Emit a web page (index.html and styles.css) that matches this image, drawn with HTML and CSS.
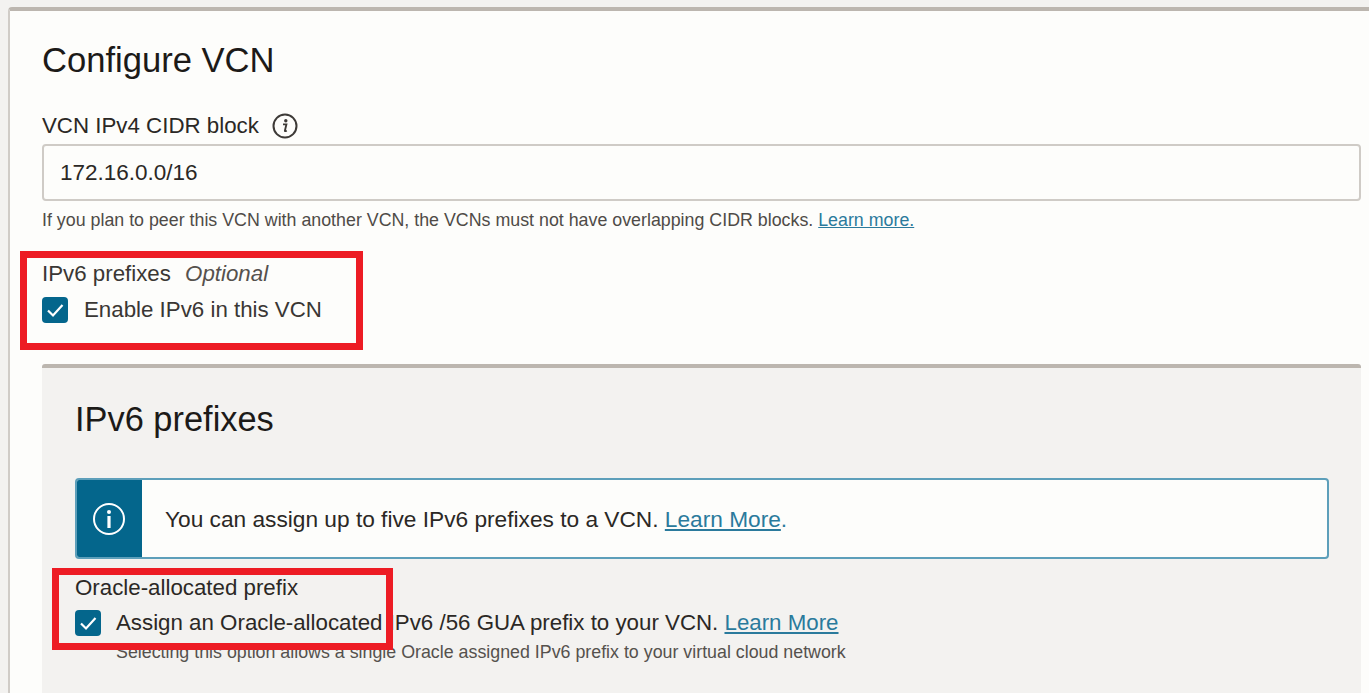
FILE: index.html
```html
<!DOCTYPE html>
<html lang="en">
<head>
    <meta charset="UTF-8">
    <title>Configure VCN</title>
    <link rel="stylesheet" href="styles.css">
</head>
<body>
    <div class="card">
        <h2>Configure VCN</h2>
        <div class="label-row">
            <label for="cidr">VCN IPv4 CIDR block</label>
            <svg class="hint-icon" width="28" height="28" viewBox="0 0 28 28">
                <circle cx="14" cy="14" r="11.5" fill="none" stroke="#3d3a37" stroke-width="2"/>
                <circle cx="14.8" cy="8.8" r="1.7" fill="#3d3a37"/>
                <path d="M12 12.4h3.4l-1.5 6.2c-.1.6.4.8 1.8-.2" fill="none" stroke="#3d3a37" stroke-width="1.9"/>
            </svg>
        </div>
        <input id="cidr" class="text-input" type="text" value="172.16.0.0/16">
        <p class="help">If you plan to peer this VCN with another VCN, the VCNs must not have overlapping CIDR blocks. <a href="#">Learn more.</a></p>

        <div class="field-title">IPv6 prefixes <em>Optional</em></div>
        <div class="check-row">
            <span class="checkbox">
                <svg width="26" height="26" viewBox="0 0 26 26"><path d="M6 13.5l5 5 9.5-10.5" fill="none" stroke="#fff" stroke-width="2.2"/></svg>
            </span>
            <span>Enable IPv6 in this VCN</span>
        </div>

        <div class="sub-panel">
            <h3>IPv6 prefixes</h3>
            <div class="alert">
                <div class="alert-icon">
                    <svg width="34" height="34" viewBox="0 0 34 34">
                        <circle cx="17" cy="17" r="15" fill="none" stroke="#fff" stroke-width="2"/>
                        <circle cx="17" cy="10" r="2" fill="#fff"/>
                        <rect x="15.4" y="14" width="3.2" height="12" fill="#fff"/>
                    </svg>
                </div>
                <div class="alert-text">You can assign up to five IPv6 prefixes to a VCN. <a href="#">Learn More</a><span class="dot">.</span></div>
            </div>
            <div class="field-title small-gap">Oracle-allocated prefix</div>
            <div class="check-row tight">
                <span class="checkbox">
                    <svg width="26" height="26" viewBox="0 0 26 26"><path d="M6 13.5l5 5 9.5-10.5" fill="none" stroke="#fff" stroke-width="2.2"/></svg>
                </span>
                <span>Assign an Oracle-allocated IPv6 /56 GUA prefix to your VCN. <a href="#">Learn More</a></span>
            </div>
            <p class="help indented">Selecting this option allows a single Oracle assigned IPv6 prefix to your virtual cloud network</p>
        </div>
    </div>

    <div class="callout callout-one"></div>
    <div class="callout callout-two"></div>
</body>
</html>
```

FILE: styles.css
```css
* {
    margin: 0;
    padding: 0;
    box-sizing: border-box;
    font-family: 'Liberation Sans', Arial, sans-serif;
}
html, body {
    height: 693px;
    overflow: hidden;
}
body {
    background: #f3f2f0;
    padding: 7px 0 0 8px;
    color: #2b2825;
}
a {
    color: #2a7a9c;
    text-decoration: underline;
}
.card {
    background: #fdfdfb;
    border-top: 4px solid #bcb6af;
    border-left: 2px solid #d0ccc7;
    border-top-left-radius: 4px;
    height: 686px;
    padding: 29px 8px 0 32px;
    overflow: hidden;
}
h2 {
    font-size: 34.6px;
    font-weight: 400;
    line-height: 40px;
    color: #1c1a18;
    margin-bottom: 32px;
}
.label-row {
    display: flex;
    align-items: center;
    gap: 12px;
    height: 28px;
    font-size: 22.3px;
    margin-bottom: 4px;
}
.hint-icon {
    flex: none;
}
.text-input {
    display: block;
    width: 100%;
    height: 57px;
    padding: 0 16px;
    border: 2px solid #cfcbc6;
    border-radius: 4px;
    background: #fdfdfb;
    font-size: 22.5px;
    color: #2b2825;
}
.help {
    font-size: 17.82px;
    line-height: 22px;
    margin-top: 8px;
    color: #4f4b47;
}
.field-title {
    font-size: 22.3px;
    line-height: 26px;
    margin-top: 30px;
    color: #3a3734;
}
.field-title em {
    margin-left: 8px;
    color: #55514d;
}
.check-row {
    display: flex;
    align-items: center;
    gap: 16px;
    height: 28px;
    margin-top: 9px;
    font-size: 22.3px;
    color: #3a3734;
}
.checkbox {
    flex: none;
    width: 26px;
    height: 26px;
    border-radius: 4px;
    background: #04668c;
    display: flex;
}
.sub-panel {
    background: #f3f2f0;
    border-top: 4px solid #bcb6af;
    border-top-left-radius: 3px;
    border-top-right-radius: 3px;
    height: 340px;
    margin-top: 40px;
    padding: 31px 32px 0 33px;
}
h3 {
    font-size: 34.4px;
    font-weight: 400;
    line-height: 40px;
    color: #1c1a18;
    margin-bottom: 39px;
}
.alert {
    display: flex;
    height: 81px;
    border: 2px solid #5d9fba;
    border-radius: 4px;
    background: #fdfdfb;
    overflow: hidden;
}
.alert-icon {
    flex: none;
    width: 67px;
    margin: -2px 0 -2px -2px;
    background: #04668c;
    display: flex;
    align-items: center;
    justify-content: center;
}
.alert-text {
    align-self: center;
    margin-left: 23px;
    padding-top: 2px;
    font-size: 22.7px;
    color: #2b2825;
}
.dot {
    color: #2a7a9c;
}
.small-gap {
    margin-top: 16px;
    color: #2b2825;
}
.tight {
    gap: 15px;
    margin-top: 8px;
    color: #2b2825;
}
.indented {
    margin-top: 4px;
    margin-left: 41px;
    color: #55514d;
}
.callout {
    position: absolute;
    border: 7px solid #ed1c24;
}
.callout-one {
    left: 20px;
    top: 251px;
    width: 343px;
    height: 99px;
}
.callout-two {
    left: 52px;
    top: 568px;
    width: 341px;
    height: 82px;
}
```
